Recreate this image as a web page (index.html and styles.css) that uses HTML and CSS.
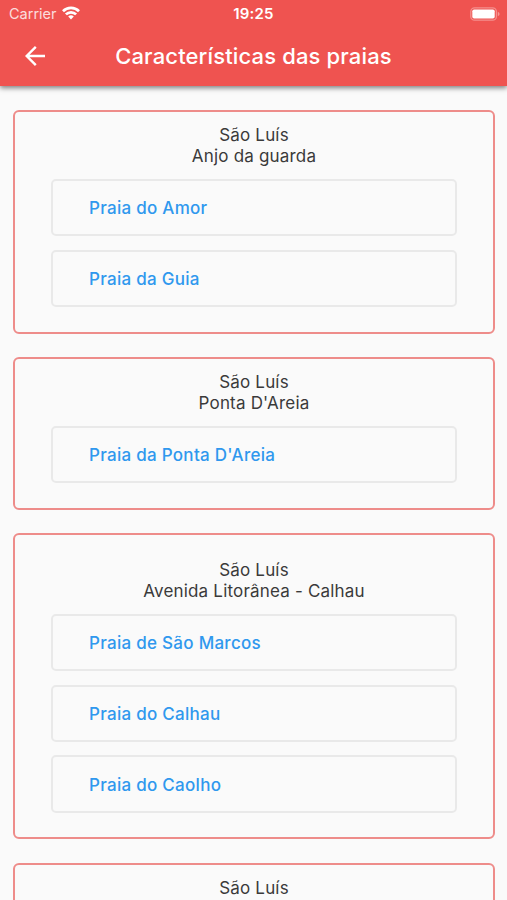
FILE: index.html
```html
<!DOCTYPE html>
<html lang="pt-BR">
<head>
<meta charset="utf-8">
<title>Características das praias</title>
<link rel="stylesheet" href="styles.css">
</head>
<body>
<header class="top">
  <div class="status">
    <div class="carrier"><span class="name">Carrier</span>
      <svg class="wifi" width="18" height="14" viewBox="0 0 18 14" fill="none" stroke="#fff" stroke-width="2.7"><path d="M1 5.2a11.4 11.4 0 0 1 16 0M3.9 8.4a7.2 7.2 0 0 1 10.2 0"/><path d="M9 13.4 6.2 10.5a4 4 0 0 1 5.6 0z" fill="#fff" stroke="none"/></svg>
    </div>
    <time class="clock">19:25</time>
    <svg class="battery" width="31" height="14" viewBox="0 0 31 14"><rect x="1.8" y=".8" width="25.6" height="12.4" rx="3.8" fill="none" stroke="#fff" stroke-width="1.3" stroke-opacity=".35"/><rect x="3.3" y="2.4" width="22.4" height="9.2" rx="1.8" fill="#fff"/><path d="M28.8 4.7q1.8.7 1.8 2.3t-1.8 2.3z" fill="#fff" fill-opacity=".4"/></svg>
  </div>
  <div class="bar">
    <svg class="back" width="20" height="20" viewBox="0 0 20 20" fill="none" stroke="#fff" stroke-width="2.4"><path d="M20 10H2M10.8 .9 1.7 10l9.1 9.1"/></svg>
    <h1 class="title">Características das praias</h1>
  </div>
</header>
<main class="list">
  <section class="card">
    <h2 class="place"><span>São Luís</span><span>Anjo da guarda</span></h2>
    <a class="beach"><span>Praia do Amor</span></a>
    <a class="beach"><span>Praia da Guia</span></a>
  </section>
  <section class="card">
    <h2 class="place"><span>São Luís</span><span>Ponta D'Areia</span></h2>
    <a class="beach"><span>Praia da Ponta D'Areia</span></a>
  </section>
  <section class="card roomy">
    <h2 class="place"><span>São Luís</span><span>Avenida Litorânea - Calhau</span></h2>
    <a class="beach"><span>Praia de São Marcos</span></a>
    <a class="beach"><span>Praia do Calhau</span></a>
    <a class="beach"><span>Praia do Caolho</span></a>
  </section>
  <section class="card">
    <h2 class="place"><span>São Luís</span></h2>
  </section>
</main>
</body>
</html>
```
FILE: styles.css
```css
* { box-sizing: border-box; }
body {
  margin: 0;
  height: 900px;
  overflow: hidden;
  background: #fafafa;
  color: #3a3a3a;
  font-family: Inter, "Liberation Sans", sans-serif;
}
.top {
  height: 86px;
  background: #ef5350;
  color: #fff;
  box-shadow: 0 2px 5px rgba(0, 0, 0, .5);
}
.status {
  display: grid;
  grid-template-columns: 1fr auto 1fr;
  align-items: center;
  height: 27px;
  padding: 0 7px 0 9px;
}
.carrier { display: flex; align-items: center; gap: 5px; }
.name { font-size: 14.5px; line-height: 27px; opacity: .8; }
.wifi { margin-top: -1px; }
.clock { margin-right: 2px; font-size: 15px; font-weight: 600; letter-spacing: .2px; }
.battery { justify-self: end; }
.bar {
  display: grid;
  grid-template-columns: 20px 1fr 20px;
  align-items: center;
  height: 58px;
  padding: 0 25px;
}
.title {
  margin: -1px 0 0;
  font-size: 22px;
  font-weight: 500;
  letter-spacing: .14px;
  text-align: center;
  white-space: nowrap;
}
.list {
  display: flex;
  flex-direction: column;
  gap: 23.5px;
  padding: 24.4px 12px 0 13px;
}
.card {
  display: flex;
  flex-direction: column;
  gap: 13.2px;
  flex-shrink: 0;
  padding: 13px 36px 24.6px;
  border: 2px solid #ee8c8a;
  border-radius: 6px;
}
.roomy { padding-top: 25px; }
.place {
  display: flex;
  flex-direction: column;
  margin: 0 0 -1.8px;
  font-size: 17px;
  font-weight: 400;
  line-height: 21px;
  letter-spacing: .19px;
  text-align: center;
}
.beach {
  display: flex;
  align-items: center;
  height: 57.6px;
  padding: 1.2px 0 0 36px;
  border: 2px solid #e9e9e9;
  border-radius: 5px;
  color: #2f98ee;
  font-size: 17px;
  font-weight: 500;
  letter-spacing: .28px;
}
```
